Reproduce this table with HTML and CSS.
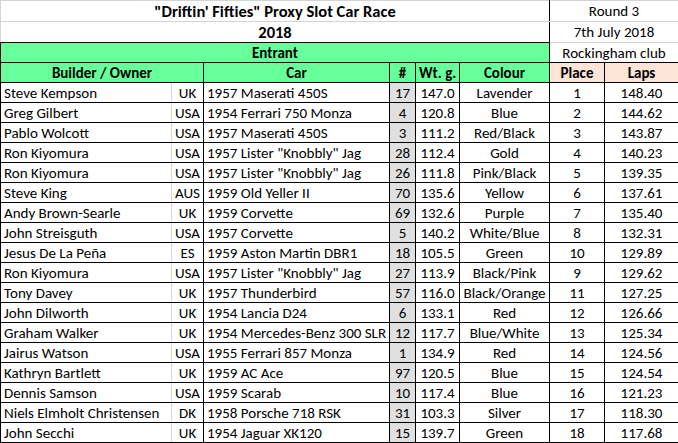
FILE: index.html
```html
<!DOCTYPE html>
<html>
<head>
<meta charset="utf-8">
<link rel="stylesheet" href="styles.css">
</head>
<body>
<table class="sheet">
<colgroup>
<col class="c-name"><col class="c-cty"><col class="c-car"><col class="c-num"><col class="c-wt"><col class="c-col"><col class="c-place"><col class="c-laps">
</colgroup>
<tr class="r-top">
<td colspan="6" class="title">"Driftin' Fifties" Proxy Slot Car Race</td>
<td colspan="2" class="info">Round 3</td>
</tr>
<tr class="r-top">
<td colspan="6" class="title year">2018</td>
<td colspan="2" class="info">7th July 2018</td>
</tr>
<tr class="r-hd">
<td colspan="6" class="green entrant">Entrant</td>
<td colspan="2" class="info club">Rockingham club</td>
</tr>
<tr class="r-hd heads">
<td colspan="2" class="green">Builder / Owner</td>
<td class="green">Car</td>
<td class="green">#</td>
<td class="green">Wt. g.</td>
<td class="green">Colour</td>
<td class="peach">Place</td>
<td class="peach">Laps</td>
</tr>
<tr><td class="name">Steve Kempson</td><td class="cty">UK</td><td class="car">1957 Maserati 450S</td><td class="num">17</td><td>147.0</td><td>Lavender</td><td>1</td><td>148.40</td></tr>
<tr><td class="name">Greg Gilbert</td><td class="cty">USA</td><td class="car">1954 Ferrari 750 Monza</td><td class="num">4</td><td>120.8</td><td>Blue</td><td>2</td><td>144.62</td></tr>
<tr><td class="name">Pablo Wolcott</td><td class="cty">USA</td><td class="car">1957 Maserati 450S</td><td class="num">3</td><td>111.2</td><td>Red/Black</td><td>3</td><td>143.87</td></tr>
<tr><td class="name">Ron Kiyomura</td><td class="cty">USA</td><td class="car">1957 Lister "Knobbly" Jag</td><td class="num">28</td><td>112.4</td><td>Gold</td><td>4</td><td>140.23</td></tr>
<tr><td class="name">Ron Kiyomura</td><td class="cty">USA</td><td class="car">1957 Lister "Knobbly" Jag</td><td class="num">26</td><td>111.8</td><td>Pink/Black</td><td>5</td><td>139.35</td></tr>
<tr><td class="name">Steve King</td><td class="cty">AUS</td><td class="car">1959 Old Yeller II</td><td class="num">70</td><td>135.6</td><td>Yellow</td><td>6</td><td>137.61</td></tr>
<tr><td class="name">Andy Brown-Searle</td><td class="cty">UK</td><td class="car">1959 Corvette</td><td class="num">69</td><td>132.6</td><td>Purple</td><td>7</td><td>135.40</td></tr>
<tr><td class="name">John Streisguth</td><td class="cty">USA</td><td class="car">1957 Corvette</td><td class="num">5</td><td>140.2</td><td>White/Blue</td><td>8</td><td>132.31</td></tr>
<tr><td class="name">Jesus De La Peña</td><td class="cty">ES</td><td class="car">1959 Aston Martin DBR1</td><td class="num">18</td><td>105.5</td><td>Green</td><td>10</td><td>129.89</td></tr>
<tr><td class="name">Ron Kiyomura</td><td class="cty">USA</td><td class="car">1957 Lister "Knobbly" Jag</td><td class="num">27</td><td>113.9</td><td>Black/Pink</td><td>9</td><td>129.62</td></tr>
<tr><td class="name">Tony Davey</td><td class="cty">UK</td><td class="car">1957 Thunderbird</td><td class="num">57</td><td>116.0</td><td>Black/Orange</td><td>11</td><td>127.25</td></tr>
<tr><td class="name">John Dilworth</td><td class="cty">UK</td><td class="car">1954 Lancia D24</td><td class="num">6</td><td>133.1</td><td>Red</td><td>12</td><td>126.66</td></tr>
<tr><td class="name">Graham Walker</td><td class="cty">UK</td><td class="car">1954 Mercedes-Benz 300 SLR</td><td class="num">12</td><td>117.7</td><td>Blue/White</td><td>13</td><td>125.34</td></tr>
<tr><td class="name">Jairus Watson</td><td class="cty">USA</td><td class="car">1955 Ferrari 857 Monza</td><td class="num">1</td><td>134.9</td><td>Red</td><td>14</td><td>124.56</td></tr>
<tr><td class="name">Kathryn Bartlett</td><td class="cty">UK</td><td class="car">1959 AC Ace</td><td class="num">97</td><td>120.5</td><td>Blue</td><td>15</td><td>124.54</td></tr>
<tr><td class="name">Dennis Samson</td><td class="cty">USA</td><td class="car">1959 Scarab</td><td class="num">10</td><td>117.4</td><td>Blue</td><td>16</td><td>121.23</td></tr>
<tr><td class="name">Niels Elmholt Christensen</td><td class="cty">DK</td><td class="car">1958 Porsche 718 RSK</td><td class="num">31</td><td>103.3</td><td>Silver</td><td>17</td><td>118.30</td></tr>
<tr><td class="name">John Secchi</td><td class="cty">UK</td><td class="car">1954 Jaguar XK120</td><td class="num">15</td><td>139.7</td><td>Green</td><td>18</td><td>117.68</td></tr>
</table>
</body>
</html>
```

FILE: styles.css
```css
html, body {
  margin: 0;
  padding: 0;
  background: #ffffff;
}

.sheet {
  border-collapse: collapse;
  table-layout: fixed;
  width: 678px;
  font-family: Carlito, Calibri, Lato, "Open Sans", sans-serif;
  font-size: 15px;
  color: #000;
}

.c-name { width: 171px; }
.c-cty { width: 32px; }
.c-car { width: 186px; }
.c-num { width: 26px; }
.c-wt { width: 44px; }
.c-col { width: 90px; }
.c-place { width: 55px; }
.c-laps { width: 74px; }

.sheet td {
  border: 1px solid #000;
  height: 19px;
  padding: 0 3px;
  text-align: center;
  white-space: nowrap;
  overflow: hidden;
  line-height: 18px;
}

.sheet .r-top td {
  height: 20px;
}

.sheet .title {
  font-weight: bold;
  font-size: 16.5px;
  border-top: 1px solid #d4d4d4;
  border-left: 1px solid #d4d4d4;
}

.sheet .r-top:first-child .title {
  border-bottom: 1px solid #d4d4d4;
}

.sheet .info {
  border-top-color: #d4d4d4;
  border-bottom-color: #d4d4d4;
}

.sheet .club {
  border-bottom-color: #000;
}

.sheet .green {
  background: #66ff99;
  font-weight: bold;
}

.sheet .entrant {
  font-weight: bold;
}

.sheet .peach {
  background: #fce4d6;
  font-weight: bold;
}

.sheet .name {
  text-align: left;
  border-right: 1px solid #d4d4d4;
}

.sheet .cty {
  padding: 0;
}

.sheet .car {
  text-align: left;
}

.sheet .num {
  background: #e0e0e0;
  padding: 0;
}
```
